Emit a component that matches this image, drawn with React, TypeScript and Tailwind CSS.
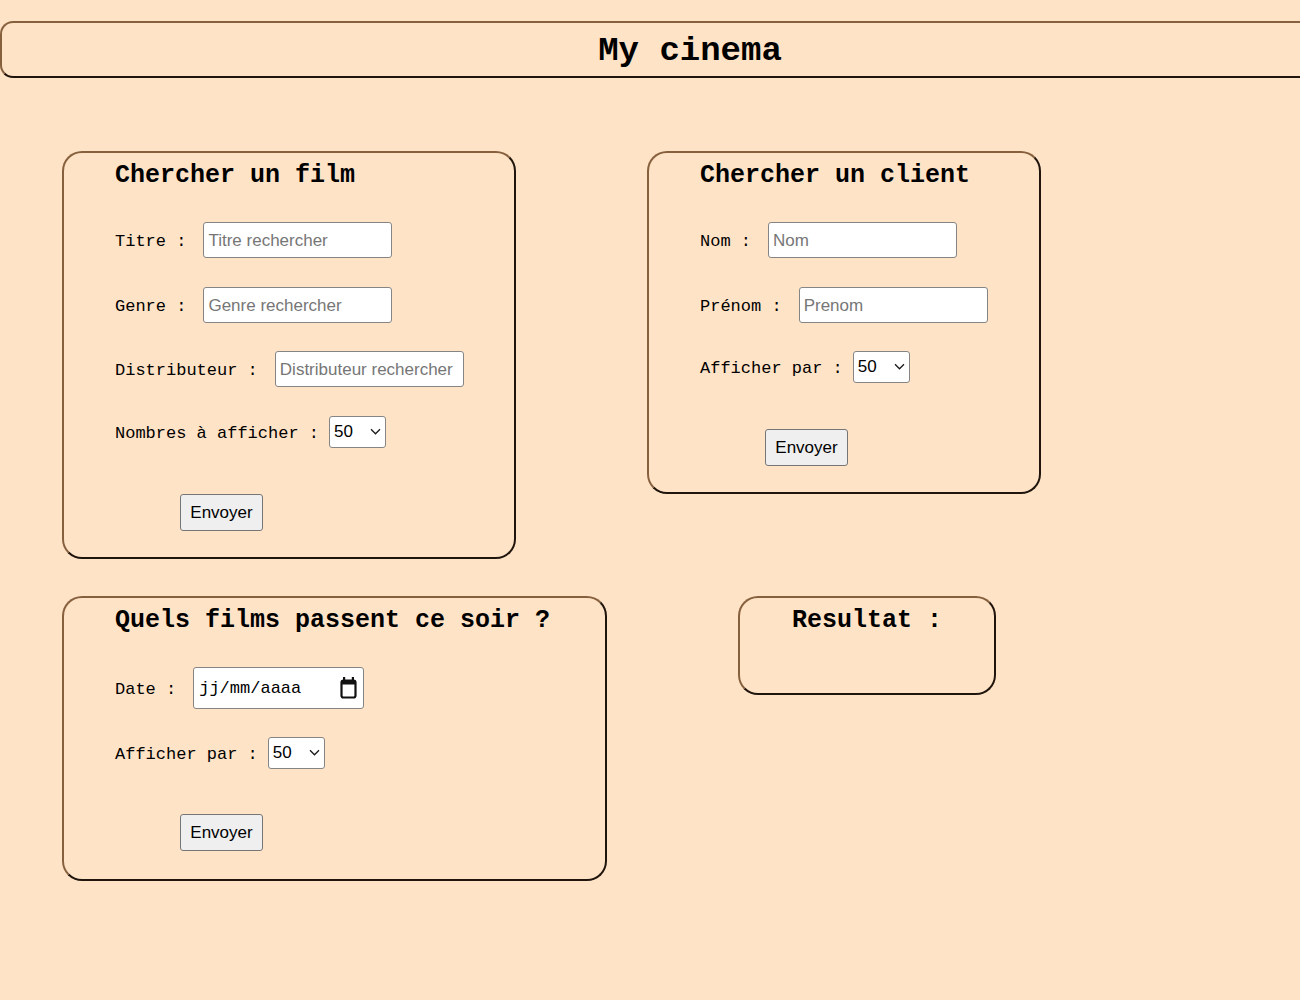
import type { ReactNode } from "react";

const mono = "font-['Courier_New','Liberation_Mono',monospace]";
const sans = "font-['Liberation_Sans',Arial,sans-serif]";
const frame =
  "border-2 border-t-[#87603e] border-l-[#87603e] border-r-[#1f150d] border-b-[#1f150d]";

function Card({
  title,
  className,
  center,
  children,
}: {
  title: string;
  className: string;
  center?: boolean;
  children?: ReactNode;
}) {
  return (
    <section className={`flex flex-col rounded-[20px] ${frame} ${className}`}>
      <h2
        className={`${mono} mt-[9px] h-[28px] text-[25px] font-bold leading-[28px] text-black ${
          center ? "text-center" : "pl-[51px]"
        }`}
      >
        {title}
      </h2>
      {children}
    </section>
  );
}

function TextRow({
  label,
  placeholder,
  className,
}: {
  label: string;
  placeholder: string;
  className: string;
}) {
  return (
    <div className={`flex items-center pl-[51px] ${className}`}>
      <label className={`${mono} pt-[4px] text-[17px] text-black`}>{label}</label>
      <input
        type="text"
        placeholder={placeholder}
        className={`${sans} ml-[17px] h-[36px] w-[189px] rounded-[3px] border border-[#858585] bg-white px-[4px] pt-[1px] text-[17px] text-black outline-none placeholder:text-[#767676]`}
      />
    </div>
  );
}

function SelectRow({ label, className }: { label: string; className: string }) {
  return (
    <div className={`flex items-center pl-[51px] ${className}`}>
      <label className={`${mono} pt-[4px] text-[17px] text-black`}>{label}</label>
      <div className="relative ml-[10px] h-[32px] w-[57px]">
        <select
          defaultValue="50"
          className={`${sans} h-full w-full appearance-none rounded-[3px] border border-[#858585] bg-white pl-[4px] text-[17px] text-black outline-none`}
        >
          <option value="10">10</option>
          <option value="20">20</option>
          <option value="50">50</option>
          <option value="100">100</option>
        </select>
        <svg
          className="pointer-events-none absolute right-[5px] top-[12px]"
          width="11"
          height="7"
          viewBox="0 0 11 7"
        >
          <path d="M1 1.2 L5.5 5.8 L10 1.2" fill="none" stroke="#1a1a1a" strokeWidth="1.3" />
        </svg>
      </div>
    </div>
  );
}

function SendButton({ className }: { className: string }) {
  return (
    <div className={`flex pl-[116px] ${className}`}>
      <button
        type="button"
        className={`${sans} h-[37px] w-[83px] rounded-[3px] border border-[#767676] bg-[#efefef] text-[17px] text-black`}
      >
        Envoyer
      </button>
    </div>
  );
}

function CalendarIcon() {
  return (
    <svg width="17" height="22" viewBox="0 0 17 22">
      <rect x="3" y="0" width="2.2" height="4" fill="#111" />
      <rect x="11.8" y="0" width="2.2" height="4" fill="#111" />
      <rect x="1.5" y="3.5" width="14" height="17" rx="2" fill="none" stroke="#111" strokeWidth="2.2" />
      <rect x="1.5" y="3.5" width="14" height="4" fill="#111" />
    </svg>
  );
}

export default function App() {
  return (
    <div className="min-h-screen overflow-hidden bg-[#ffe3c6] pb-10">
      <header
        className={`mt-[21px] flex h-[57px] w-[1380px] items-center justify-center rounded-[13px] pt-[3px] ${frame}`}
      >
        <h1 className={`${mono} text-[34px] font-bold text-black`}>My cinema</h1>
      </header>

      <div className="ml-[62px] mt-[73px] flex items-start gap-[131px]">
        <Card title="Chercher un film" className="w-[454px] pb-[26px]">
          <TextRow label="Titre :" placeholder="Titre rechercher" className="mt-[32px]" />
          <TextRow label="Genre :" placeholder="Genre rechercher" className="mt-[29px]" />
          <TextRow
            label="Distributeur :"
            placeholder="Distributeur rechercher"
            className="mt-[28px]"
          />
          <SelectRow label="Nombres à afficher :" className="mt-[29px]" />
          <SendButton className="mt-[46px]" />
        </Card>

        <Card title="Chercher un client" className="w-[394px] pb-[26px]">
          <TextRow label="Nom :" placeholder="Nom" className="mt-[32px]" />
          <TextRow label="Prénom :" placeholder="Prenom" className="mt-[29px]" />
          <SelectRow label="Afficher par :" className="mt-[28px]" />
          <SendButton className="mt-[46px]" />
        </Card>
      </div>

      <div className="ml-[62px] mt-[37px] flex items-start gap-[131px]">
        <Card title="Quels films passent ce soir ?" className="w-[545px] pb-[28px]">
          <div className="mt-[32px] flex items-center pl-[51px]">
            <label className={`${mono} pt-[4px] text-[17px] text-black`}>Date :</label>
            <div className="ml-[17px] flex h-[42px] w-[171px] items-center justify-between rounded-[3px] border border-[#858585] bg-white pl-[5px] pr-[6px]">
              <span className={`${mono} pt-[2px] text-[17px] text-black`}>jj/mm/aaaa</span>
              <CalendarIcon />
            </div>
          </div>
          <SelectRow label="Afficher par :" className="mt-[28px]" />
          <SendButton className="mt-[45px]" />
        </Card>

        <Card title="Resultat :" center className="h-[99px] w-[258px]" />
      </div>
    </div>
  );
}
